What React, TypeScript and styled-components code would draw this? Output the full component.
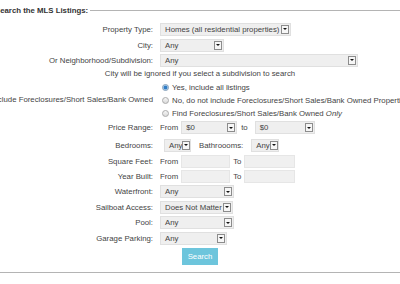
import React from 'react';
import styled, { createGlobalStyle } from 'styled-components';

const GlobalStyle = createGlobalStyle`
  html, body {
    margin: 0;
    padding: 0;
    background: #fff;
    overflow: hidden;
  }
  body {
    font-family: "Liberation Sans", Arial, sans-serif;
    font-size: 7.8px;
    color: #444;
  }
`;

const Page = styled.div`
  width: 400px;
  height: 284px;
  overflow: hidden;
`;

const Fieldset = styled.fieldset`
  margin: 4px 0 0 -20px;
  padding: 4px 12px 5.5px;
  border: 1px solid #b4b4b4;
  width: 414px;
  min-width: 0;
  box-sizing: content-box;
`;

const Legend = styled.legend`
  padding: 0 2px;
  font-weight: bold;
  color: #333;
  line-height: 13px;
`;

const Form = styled.div`
  display: grid;
  grid-template-columns: 160px 1fr;
  grid-template-rows: 16.5px 15.5px 14px 13.5px 13.5px 13px 12px 17px 18px 15px 15px 15.5px 15.5px 15.5px 15px 21px;
  column-gap: 7px;
`;

const Label = styled.div<{ $rows?: number }>`
  display: flex;
  justify-content: flex-end;
  align-items: center;
  white-space: nowrap;
  grid-column: 1;
  grid-row: ${p => (p.$rows ? `span ${p.$rows}` : 'auto')};
`;

const Field = styled.div<{ $gap?: number }>`
  display: flex;
  align-items: center;
  gap: ${p => p.$gap ?? 3}px;
  grid-column: 2;
  white-space: nowrap;
  min-width: 0;
`;

const Note = styled.div`
  grid-column: 1 / -1;
  display: flex;
  justify-content: center;
  align-items: center;
  white-space: nowrap;
`;

const SelectBox = styled.div<{ $w: number; $ml?: number }>`
  display: flex;
  align-items: center;
  justify-content: space-between;
  box-sizing: border-box;
  width: ${p => p.$w}px;
  height: 13px;
  margin-left: ${p => p.$ml ?? 0}px;
  padding: 0 1px 0 4px;
  background: #efefef;
  border: 1px solid #e0e0e0;
  color: #444;
  white-space: nowrap;
  overflow: hidden;
  flex: none;
`;

const Arrow = styled.span`
  box-sizing: border-box;
  width: 8px;
  height: 9px;
  border: 1px solid #8c8c8c;
  background: #f6f6f6;
  display: flex;
  align-items: center;
  justify-content: center;
  flex: none;

  &::after {
    content: '';
    border-left: 2px solid transparent;
    border-right: 2px solid transparent;
    border-top: 2px solid #111;
  }
`;

const TextBox = styled.input<{ $w: number }>`
  box-sizing: border-box;
  width: ${p => p.$w}px;
  height: 13px;
  margin: 0;
  padding: 0 3px;
  background: #f0f0f0;
  border: 1px solid #e6e6e6;
  font: inherit;
  outline: none;
`;

const Radio = styled.span<{ $checked?: boolean }>`
  box-sizing: border-box;
  width: 7px;
  height: 7px;
  margin-left: 2px;
  border-radius: 50%;
  border: 1px solid ${p => (p.$checked ? '#7f9db9' : '#aaa')};
  background: ${p =>
    p.$checked
      ? 'radial-gradient(circle, #2f7cc6 0 1.4px, #a8cbea 2.2px, #e6f0f9 3px)'
      : 'linear-gradient(#f6f6f6, #dadada)'};
  flex: none;
`;

const Button = styled.button`
  grid-column: 1 / -1;
  justify-self: center;
  align-self: center;
  width: 36px;
  height: 17px;
  padding: 0;
  border: none;
  background: #6dc5dc;
  color: #fff;
  font: inherit;
`;

const Select = ({ value, w, ml }: { value: string; w: number; ml?: number }) => (
  <SelectBox $w={w} $ml={ml}>
    <span>{value}</span>
    <Arrow />
  </SelectBox>
);

export default function App() {
  return (
    <Page>
      <GlobalStyle />
      <Fieldset>
        <Legend>Search the MLS Listings:</Legend>
        <Form>
          <Label>Property Type:</Label>
          <Field>
            <Select value="Homes (all residential properties)" w={131} />
          </Field>

          <Label>City:</Label>
          <Field>
            <Select value="Any" w={64} />
          </Field>

          <Label>Or Neighborhood/Subdivision:</Label>
          <Field>
            <Select value="Any" w={198} />
          </Field>

          <Note>City will be ignored if you select a subdivision to search</Note>

          <Label $rows={3}>Include Foreclosures/Short Sales/Bank Owned</Label>
          <Field>
            <Radio $checked />
            <span>Yes, include all listings</span>
          </Field>
          <Field>
            <Radio />
            <span>No, do not include Foreclosures/Short Sales/Bank Owned Properties</span>
          </Field>
          <Field>
            <Radio />
            <span>
              Find Foreclosures/Short Sales/Bank Owned <em>Only</em>
            </span>
          </Field>

          <Label>Price Range:</Label>
          <Field $gap={3}>
            <span>From</span>
            <Select value="$0" w={56} />
            <span style={{ margin: '0 4px 0 1px' }}>to</span>
            <Select value="$0" w={60} />
          </Field>

          <Label>Bedrooms:</Label>
          <Field $gap={8}>
            <Select value="Any" w={27} ml={4} />
            <span>Bathroooms:</span>
            <Select value="Any" w={28} />
          </Field>

          <Label>Square Feet:</Label>
          <Field $gap={3}>
            <span>From</span>
            <TextBox $w={49} readOnly />
            <span>To</span>
            <TextBox $w={51} readOnly />
          </Field>

          <Label>Year Built:</Label>
          <Field $gap={3}>
            <span>From</span>
            <TextBox $w={49} readOnly />
            <span>To</span>
            <TextBox $w={51} readOnly />
          </Field>

          <Label>Waterfront:</Label>
          <Field>
            <Select value="Any" w={74} />
          </Field>

          <Label>Sailboat Access:</Label>
          <Field>
            <Select value="Does Not Matter" w={73} />
          </Field>

          <Label>Pool:</Label>
          <Field>
            <Select value="Any" w={74} />
          </Field>

          <Label>Garage Parking:</Label>
          <Field>
            <Select value="Any" w={67} />
          </Field>

          <Button>Search</Button>
        </Form>
      </Fieldset>
    </Page>
  );
}
